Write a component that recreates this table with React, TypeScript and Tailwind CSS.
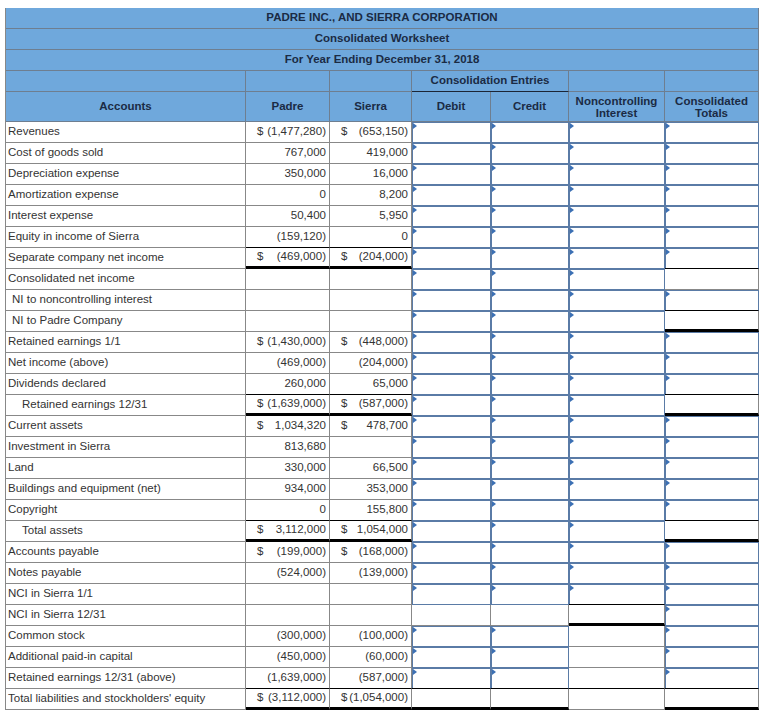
import React from "react";

type Spec = "I" | "Ib" | "P" | "Pb" | "Pt";

interface Row {
  label: string;
  indent?: 0 | 1 | 2;
  p?: string;
  pd?: boolean;
  s?: string;
  sd?: boolean;
  psb?: "n" | "b" | "t";
  c: [Spec, Spec, Spec, Spec];
}

const rows: Row[] = [
  { label: "Revenues", p: "(1,477,280)", pd: true, s: "(653,150)", sd: true, c: ["I", "I", "I", "I"] },
  { label: "Cost of goods sold", p: "767,000", s: "419,000", c: ["I", "I", "I", "I"] },
  { label: "Depreciation expense", p: "350,000", s: "16,000", c: ["I", "I", "I", "I"] },
  { label: "Amortization expense", p: "0", s: "8,200", c: ["I", "I", "I", "I"] },
  { label: "Interest expense", p: "50,400", s: "5,950", c: ["I", "I", "I", "I"] },
  { label: "Equity in income of Sierra", p: "(159,120)", s: "0", psb: "b", c: ["I", "I", "I", "I"] },
  { label: "Separate company net income", p: "(469,000)", pd: true, s: "(204,000)", sd: true, psb: "t", c: ["I", "I", "I", "Ib"] },
  { label: "Consolidated net income", c: ["I", "I", "I", "P"] },
  { label: "NI to noncontrolling interest", indent: 1, c: ["I", "I", "I", "Ib"] },
  { label: "NI to Padre Company", indent: 1, c: ["I", "I", "I", "Pt"] },
  { label: "Retained earnings 1/1", p: "(1,430,000)", pd: true, s: "(448,000)", sd: true, c: ["I", "I", "I", "I"] },
  { label: "Net income (above)", p: "(469,000)", s: "(204,000)", c: ["I", "I", "I", "I"] },
  { label: "Dividends declared", p: "260,000", s: "65,000", psb: "b", c: ["I", "I", "I", "Ib"] },
  { label: "Retained earnings 12/31", indent: 2, p: "(1,639,000)", pd: true, s: "(587,000)", sd: true, psb: "t", c: ["I", "I", "I", "Pt"] },
  { label: "Current assets", p: "1,034,320", pd: true, s: "478,700", sd: true, c: ["I", "I", "I", "I"] },
  { label: "Investment in Sierra", p: "813,680", s: "", c: ["I", "I", "I", "I"] },
  { label: "Land", p: "330,000", s: "66,500", c: ["I", "I", "I", "I"] },
  { label: "Buildings and equipment (net)", p: "934,000", s: "353,000", c: ["I", "I", "I", "I"] },
  { label: "Copyright", p: "0", s: "155,800", psb: "b", c: ["I", "I", "I", "Ib"] },
  { label: "Total assets", indent: 2, p: "3,112,000", pd: true, s: "1,054,000", sd: true, psb: "t", c: ["I", "I", "I", "Pt"] },
  { label: "Accounts payable", p: "(199,000)", pd: true, s: "(168,000)", sd: true, c: ["I", "I", "I", "I"] },
  { label: "Notes payable", p: "(524,000)", s: "(139,000)", c: ["I", "I", "I", "I"] },
  { label: "NCI in Sierra 1/1", c: ["I", "I", "Ib", "I"] },
  { label: "NCI in Sierra 12/31", c: ["P", "P", "Pt", "I"] },
  { label: "Common stock", p: "(300,000)", s: "(100,000)", c: ["I", "I", "P", "I"] },
  { label: "Additional paid-in capital", p: "(450,000)", s: "(60,000)", c: ["I", "I", "P", "I"] },
  { label: "Retained earnings 12/31 (above)", p: "(1,639,000)", s: "(587,000)", psb: "b", c: ["Ib", "Ib", "Pb", "Ib"] },
  { label: "Total liabilities and stockholders' equity", p: "(3,112,000)", pd: true, s: "(1,054,000)", sd: true, psb: "t", c: ["Pt", "Pt", "P", "Pt"] },
];

function EntryCell({ spec }: { spec: Spec }) {
  if (spec === "I" || spec === "Ib") {
    return (
      <div
        className={
          "relative h-[21px] border-r border-b border-[#5a7ba6] shadow-[inset_1px_1px_0_#5a7ba6] bg-white " +
          (spec === "Ib" ? "border-b-black" : "")
        }
      >
        <span className="absolute left-[1px] top-[1px] h-0 w-0 border-y-[3px] border-y-transparent border-l-[4px] border-l-[#3c70b4]" />
      </div>
    );
  }
  let cls = "h-[21px] border-r border-b border-[#888] bg-white ";
  if (spec === "Pb") cls += "border-b-black";
  if (spec === "Pt") cls += "border-b-[3px] border-b-black";
  return <div className={cls} />;
}

function AmountCell({ value, dollar, bottom }: { value?: string; dollar?: boolean; bottom?: "n" | "b" | "t" }) {
  let cls = "flex h-[21px] items-center justify-between border-r border-b border-[#888] pl-[11px] pr-[3px] text-[#333] ";
  if (bottom === "b") cls += "border-b-black";
  if (bottom === "t") cls += "border-b-[3px] border-b-black";
  return (
    <div className={cls}>
      <span>{dollar ? "$" : ""}</span>
      <span>{value ?? ""}</span>
    </div>
  );
}

const hdr = "flex items-center justify-center border-r border-b border-[#6e7e90] bg-[#6fa8dc] font-bold text-[#1b2b44]";

export default function App() {
  return (
    <div className="min-h-[722px] w-[780px] bg-white pt-[8px] pl-[5px]" style={{ fontFamily: '"Liberation Sans", Arial, sans-serif' }}>
      <div className="grid w-max grid-cols-[240px_84px_82px_79px_78px_96px_94px] border-l border-[#888] text-[11.5px] leading-none">
        <div className={hdr + " col-span-7 h-[21px]"}>PADRE INC., AND SIERRA CORPORATION</div>
        <div className={hdr + " col-span-7 h-[21px]"}>Consolidated Worksheet</div>
        <div className={hdr + " col-span-7 h-[21px]"}>For Year Ending December 31, 2018</div>

        <div className={hdr + " h-[21px]"} />
        <div className={hdr + " h-[21px]"} />
        <div className={hdr + " h-[21px]"} />
        <div className={hdr + " col-span-2 h-[21px] border-b-[#1b2536]"}>Consolidation Entries</div>
        <div className={hdr + " h-[21px]"} />
        <div className={hdr + " h-[21px]"} />

        <div className={hdr + " h-[30px]"}>Accounts</div>
        <div className={hdr + " h-[30px]"}>Padre</div>
        <div className={hdr + " h-[30px]"}>Sierra</div>
        <div className={hdr + " h-[30px]"}>Debit</div>
        <div className={hdr + " h-[30px]"}>Credit</div>
        <div className={hdr + " h-[30px] flex-col text-center leading-[12px]"}>
          <span>Noncontrolling</span>
          <span>Interest</span>
        </div>
        <div className={hdr + " h-[30px] flex-col text-center leading-[12px]"}>
          <span>Consolidated</span>
          <span>Totals</span>
        </div>

        {rows.map((r, i) => (
          <React.Fragment key={i}>
            <div
              className={
                "flex h-[21px] items-center border-r border-b border-[#888] text-[#333] whitespace-nowrap " +
                (r.indent === 1 ? "pl-[6px]" : r.indent === 2 ? "pl-[16px]" : "pl-[2px]")
              }
            >
              {r.label}
            </div>
            <AmountCell value={r.p} dollar={r.pd} bottom={r.psb} />
            <AmountCell value={r.s} dollar={r.sd} bottom={r.psb} />
            {r.c.map((spec, j) => (
              <EntryCell key={j} spec={spec} />
            ))}
          </React.Fragment>
        ))}
      </div>
    </div>
  );
}
